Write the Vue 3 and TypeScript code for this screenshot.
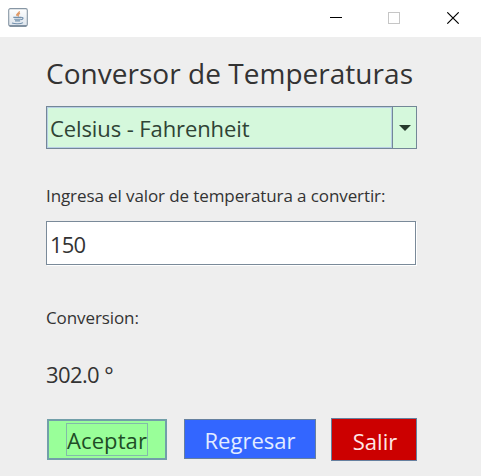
<script setup lang="ts">
import { ref } from 'vue'

const mode = ref('Celsius - Fahrenheit')
const amount = ref('150')
const result = ref('302.0 °')
</script>

<template>
  <div class="window">
    <header class="titlebar">
      <svg class="java" width="20" height="19" viewBox="0 0 20 19">
        <defs>
          <linearGradient id="tile" x1="0" y1="0" x2="0" y2="1">
            <stop offset="0" stop-color="#ffffff" />
            <stop offset="1" stop-color="#dce4ec" />
          </linearGradient>
        </defs>
        <rect x="0.7" y="0.6" width="18.6" height="17.6" rx="1.6" fill="url(#tile)" stroke="#8796a4" stroke-width="1.1" />
        <path d="M1.5 17.9h17" stroke="#52677c" stroke-width="1" />
        <path d="M11.3 3.2c.6 2-3.6 2.5-2.5 4.6M12 5.4c-2 1-2.6 1.6-1.3 3" fill="none" stroke="#df9a68" stroke-width="1.4" />
        <path d="M5.3 9.4h8.2M6.2 11.2h6.8M7 12.9h5.2M13.6 9.6c2.2-.4 1.8 1.6-.6 2.2M4 15c3 1.2 8.8 1 11-.4" fill="none" stroke="#7391ad" stroke-width="1.1" />
      </svg>
      <svg class="controls" width="130" height="12" viewBox="0 0 130 12" fill="none" shape-rendering="crispEdges">
        <path d="M0 5.5h12" stroke="#000" />
        <rect x="58.5" y="0.5" width="11" height="11" stroke="#c6c6c6" />
        <path d="M117.3 .3l11.4 11.4M128.7 .3l-11.4 11.4" stroke="#000" stroke-width="1.1" shape-rendering="auto" />
      </svg>
    </header>
    <main class="content">
      <h1 class="title">Conversor de Temperaturas</h1>
      <div class="combo">
        <div class="value">{{ mode }}</div>
        <div class="arrow">
          <svg width="12" height="6" viewBox="0 0 12 6"><path d="M0 0h12L6 6z" fill="#263a2c" /></svg>
        </div>
      </div>
      <label class="prompt">Ingresa el valor de temperatura a convertir:</label>
      <div class="field">{{ amount }}</div>
      <div class="caption">Conversion:</div>
      <div class="result">{{ result }}</div>
      <div class="buttons">
        <button class="btn accept"><span>Aceptar</span></button>
        <button class="btn back"><span>Regresar</span></button>
        <button class="btn exit"><span>Salir</span></button>
      </div>
    </main>
  </div>
</template>

<style>
body { margin: 0; overflow: hidden; }
</style>

<style scoped>
.window {
  width: 481px;
  height: 476px;
  background: #eee;
  color: #333;
  font-family: "Open Sans", "Noto Sans", sans-serif;
  white-space: nowrap;
  overflow: hidden;
}
.window * { box-sizing: border-box; }
.titlebar {
  display: flex;
  justify-content: space-between;
  height: 37px;
  padding: 8px 21px 0 8px;
  background: #fff;
}
.controls { margin-top: 4px; }
.content {
  display: flex;
  flex-direction: column;
  width: 371px;
  margin-left: 46px;
}
.title {
  margin: 16px 0 0;
  height: 40px;
  line-height: 40px;
  font-size: 28px;
  font-weight: 400;
  letter-spacing: 0.03px;
}
.combo {
  display: flex;
  height: 43px;
  margin-top: 13px;
  border: 1px solid #738797;
  background: #d5f8dc;
}
.value {
  flex: 1;
  border: 1px solid #b8cfe5;
  padding-left: 2px;
  line-height: 40px;
  font-size: 22px;
  letter-spacing: -0.1px;
  color: #2f4335;
}
.arrow {
  display: flex;
  align-items: center;
  justify-content: center;
  width: 24px;
  border-left: 1px solid #738797;
  padding-top: 1px;
}
.prompt, .caption {
  height: 24px;
  line-height: 24px;
  font-size: 17px;
  letter-spacing: -0.1px;
}
.prompt { margin-top: 35px; }
.field {
  width: 370px;
  height: 44px;
  margin-top: 13px;
  padding-left: 3px;
  border: 1px solid #7a8a99;
  box-shadow: 1px 1px #fff;
  background: #fff;
  line-height: 44px;
  font-size: 22px;
  letter-spacing: -0.8px;
}
.caption { margin-top: 41px; }
.result {
  height: 30px;
  margin-top: 29px;
  line-height: 30px;
  font-size: 22px;
  letter-spacing: -0.6px;
}
.buttons {
  display: flex;
  align-items: flex-start;
  height: 43px;
  margin-top: 29px;
  padding-left: 1px;
}
.btn {
  display: flex;
  align-items: center;
  justify-content: center;
  margin: 1px 0 0;
  padding: 2px 0 0;
  border: 1px solid #66809f;
  font: inherit;
  font-size: 22px;
  line-height: 30px;
}
.accept {
  width: 120px;
  height: 41px;
  border: 2px solid #729fa9;
  background: #9f9;
  color: #204d26;
  padding: 0;
}
.accept span {
  width: 82px;
  height: 33px;
  border: 1px solid #82bba9;
  line-height: 33px;
  letter-spacing: 0.1px;
}
.back {
  width: 132px;
  height: 40px;
  margin-left: 17px;
  background: #36f;
  color: #e2ecff;
}
.exit {
  width: 86px;
  height: 43px;
  margin: 0 0 0 15px;
  padding-left: 2px;
  background: #c00;
  color: #ffe6e6;
}
</style>
